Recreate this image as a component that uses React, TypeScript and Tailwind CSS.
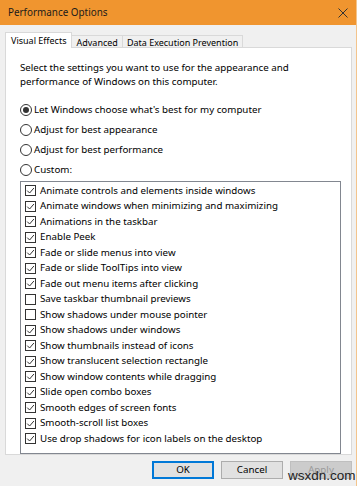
import React from 'react'

const OPTIONS = [
  { label: "Let Windows choose what's best for my computer", on: true },
  { label: 'Adjust for best appearance', on: false },
  { label: 'Adjust for best performance', on: false },
  { label: 'Custom:', on: false },
]

const EFFECTS: [string, boolean][] = [
  ['Animate controls and elements inside windows', true],
  ['Animate windows when minimizing and maximizing', true],
  ['Animations in the taskbar', true],
  ['Enable Peek', true],
  ['Fade or slide menus into view', true],
  ['Fade or slide ToolTips into view', true],
  ['Fade out menu items after clicking', true],
  ['Save taskbar thumbnail previews', false],
  ['Show shadows under mouse pointer', false],
  ['Show shadows under windows', true],
  ['Show thumbnails instead of icons', true],
  ['Show translucent selection rectangle', true],
  ['Show window contents while dragging', true],
  ['Slide open combo boxes', true],
  ['Smooth edges of screen fonts', true],
  ['Smooth-scroll list boxes', true],
  ['Use drop shadows for icon labels on the desktop', true],
]

function Radio({ on }: { on: boolean }) {
  return (
    <span className="w-[12px] h-[12px] rounded-full border border-[#333] bg-white flex items-center justify-center shrink-0">
      {on && <span className="w-[6px] h-[6px] rounded-full bg-[#333]" />}
    </span>
  )
}

function Check({ on }: { on: boolean }) {
  return (
    <span className="w-[11px] h-[11px] border border-[#333] bg-white flex items-center justify-center shrink-0">
      {on && (
        <svg width="9" height="9" viewBox="0 0 9 9">
          <path d="M1.2 4.6 L3.6 7 L7.9 2" fill="none" stroke="#333" strokeWidth="1" />
        </svg>
      )}
    </span>
  )
}

export default function App() {
  return (
    <div className="w-[360px] h-[486px] bg-white overflow-hidden text-[9.75px] text-black font-['Noto_Sans',sans-serif] leading-none">
      <div className="relative w-[357px] h-[486px] bg-[#f0f0f0] border-r border-[#f3c48c] flex flex-col">
        <div className="h-[25px] bg-[#f0952f] flex items-center justify-between pl-[8px] pr-[8px] shrink-0">
          <span className="text-[9.9px] text-[#1a1a1a]">Performance Options</span>
          <svg width="10" height="10" viewBox="0 0 10 10">
            <path d="M0.5 0.5 L9.5 9.5 M9.5 0.5 L0.5 9.5" stroke="#333" strokeWidth="1" />
          </svg>
        </div>

        <div className="flex items-end pl-[5px] mt-[7px] h-[16px] relative z-10 whitespace-nowrap text-[9px]">
          <div className="shrink-0 px-[5px] h-[16px] bg-white border border-b-0 border-[#d9d9d9] flex items-center">
            Visual Effects
          </div>
          <div className="shrink-0 px-[4px] h-[13px] border-t border-r border-[#d9d9d9] flex items-center">
            Advanced
          </div>
          <div className="shrink-0 px-[4px] h-[13px] border-t border-r border-[#d9d9d9] flex items-center">
            Data Execution Prevention
          </div>
        </div>

        <div className="ml-[5px] w-[347px] h-[408px] -mt-px bg-white border border-[#d9d9d9] pl-[14px] pt-[13px] flex flex-col">
          <p className="leading-[14px]">
            Select the settings you want to use for the appearance and
            <br />
            performance of Windows on this computer.
          </p>
          <div className="mt-[15px] flex flex-col gap-[7.3px]">
            {OPTIONS.map(o => (
              <div key={o.label} className="flex items-center gap-[2px] h-[12.5px]">
                <Radio on={o.on} />
                <span>{o.label}</span>
              </div>
            ))}
          </div>
          <div className="mt-[5px] w-[321px] h-[273px] border border-[#828790] pt-[1px] pl-[4px]">
            {EFFECTS.map(([label, on]) => (
              <div key={label} className="flex items-center gap-[4px] h-[15.5px]">
                <Check on={on} />
                <span>{label}</span>
              </div>
            ))}
          </div>
        </div>

        <div className="flex justify-end gap-[7px] pr-[4px] mt-[6px]">
          <button className="w-[62px] h-[18px] bg-[#e1e1e1] border border-[#0078d7] outline outline-1 outline-[#0078d7] -outline-offset-2">
            OK
          </button>
          <button className="w-[62px] h-[18px] bg-[#e1e1e1] border border-[#adadad]">
            Cancel
          </button>
          <button className="w-[62px] h-[18px] bg-[#cccccc] border border-[#bfbfbf] text-[#9a9a9a]">
            Apply
          </button>
        </div>

        <span className="absolute left-[288px] top-[469px] text-[13.5px] text-[#222] font-['Liberation_Sans',sans-serif]">
          wsxdn.com
        </span>
      </div>
    </div>
  )
}
